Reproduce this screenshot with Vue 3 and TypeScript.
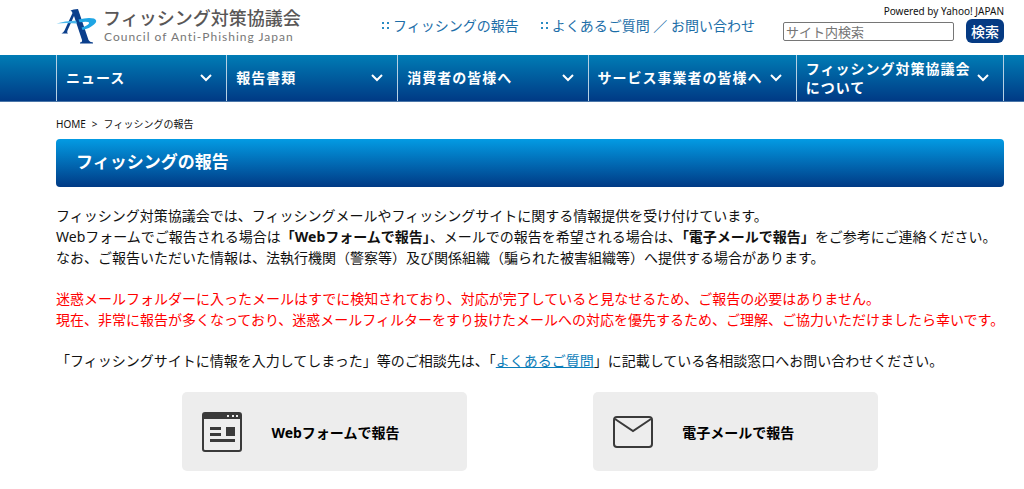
<script setup lang="ts">
interface NavItem {
  label: string[]
}

const navItems: NavItem[] = [
  { label: ['ニュース'] },
  { label: ['報告書類'] },
  { label: ['消費者の皆様へ'] },
  { label: ['サービス事業者の皆様へ'] },
  { label: ['フィッシング対策協議会', 'について'] },
]

const helpLinks: string[] = ['フィッシングの報告', 'よくあるご質問 ／ お問い合わせ']
</script>

<template>
  <div class="page">
    <header class="header wrap">
      <a class="logo" href="#">
        <svg class="mark" viewBox="0 0 41 36" aria-hidden="true">
          <path d="M14.500 2.500Q17 1 22 1L32.500 32Q33.500 34 37 34.500V35.500H24V34.500Q26.500 34 26 32L18 8L11.500 22.500Q10.500 24.500 12 25.500H5.500Q7.500 24.500 8.500 22.500L16.500 5Q16 3 14.500 2.500Z" fill="#0b3f8c" />
          <path d="M0.500 15.500Q10 12.500 20 12.800L21 15.500Q10 14.500 0.500 15.500Z" fill="#4bb8ec" />
          <path d="M22.500 11.500Q32 9 38 10.500Q42.500 12.500 38 16.500Q33.500 20.500 26.500 22L25.500 19.500Q31 18 33 15.500Q34 12.800 23.500 14.300Z" fill="#1fa5e4" />
        </svg>
        <span class="logo-text">
          <span class="logo-ja">フィッシング対策協議会</span>
          <span class="logo-en">Council of Anti-Phishing Japan</span>
        </span>
      </a>
      <nav class="help">
        <a v-for="link in helpLinks" :key="link" href="#">
          <svg class="dots" viewBox="0 0 10 8" aria-hidden="true">
            <path d="M1 0h2v2H1zM6 0h2v2H6zM1 5h2v2H1zM6 5h2v2H6z" fill="#2a8cc4" />
          </svg>
          <span>{{ link }}</span>
        </a>
      </nav>
      <form class="search" @submit.prevent>
        <span class="powered">Powered by Yahoo! JAPAN</span>
        <span class="search-row">
          <input type="search" placeholder="サイト内検索" aria-label="サイト内検索" />
          <button type="submit">検索</button>
        </span>
      </form>
    </header>

    <nav class="global">
      <ul class="wrap">
        <li v-for="item in navItems" :key="item.label[0]">
          <a href="#">
            <span class="nav-label"><span v-for="line in item.label" :key="line">{{ line }}</span></span>
            <svg class="chevron" viewBox="0 0 12 8" aria-hidden="true">
              <path d="M1 1l5 5 5-5" fill="none" stroke="#fff" stroke-width="2" />
            </svg>
          </a>
        </li>
      </ul>
    </nav>

    <main class="wrap">
      <div class="crumbs"><a href="#">HOME</a><span>&gt;</span><span>フィッシングの報告</span></div>
      <h1>フィッシングの報告</h1>
      <p>
        フィッシング対策協議会では、フィッシングメールやフィッシングサイトに関する情報提供を受け付けています。<br />
        Webフォームでご報告される場合は<b>「Webフォームで報告」</b>、メールでの報告を希望される場合は、<b>「電子メールで報告」</b>をご参考にご連絡ください。<br />
        なお、ご報告いただいた情報は、法執行機関（警察等）及び関係組織（騙られた被害組織等）へ提供する場合があります。
      </p>
      <p class="notice">
        迷惑メールフォルダーに入ったメールはすでに検知されており、対応が完了していると見なせるため、ご報告の必要はありません。<br />
        現在、非常に報告が多くなっており、迷惑メールフィルターをすり抜けたメールへの対応を優先するため、ご理解、ご協力いただけましたら幸いです。
      </p>
      <p>「フィッシングサイトに情報を入力してしまった」等のご相談先は、「<a href="#">よくあるご質問</a>」に記載している各相談窓口へお問い合わせください。</p>
      <div class="cards">
        <a class="card" href="#">
          <svg class="icon" viewBox="0 0 40 40" aria-hidden="true">
            <rect x="1" y="1" width="38" height="38" rx="2" fill="none" stroke="#3a3a3a" stroke-width="2" />
            <path d="M1 1h38v6H1z" fill="#3a3a3a" />
            <path d="M25 3h2v2h-2zM30 3h2v2h-2zM34 3h2v2h-2z" fill="#ededed" />
            <path d="M8 15h11v3H8zM8 21h11v3H8zM8 27h25v3H8zM24 15h9v9h-9z" fill="#3a3a3a" />
          </svg>
          <span>Webフォームで報告</span>
        </a>
        <a class="card" href="#">
          <svg class="icon" viewBox="0 0 40 40" aria-hidden="true">
            <rect x="1" y="5" width="38" height="30" rx="3" fill="none" stroke="#3a3a3a" stroke-width="2" />
            <path d="M2 7l18 12L38 7" fill="none" stroke="#3a3a3a" stroke-width="2" />
          </svg>
          <span>電子メールで報告</span>
        </a>
      </div>
    </main>
  </div>
</template>

<style>
body {
  margin: 0;
  background: #fff;
}
</style>

<style scoped>
.page {
  font-family: 'Noto Sans', 'Noto Sans CJK JP', sans-serif;
  font-size: 14px;
  line-height: 21px;
  color: #111;
  overflow-x: hidden;
}
a {
  color: inherit;
  text-decoration: none;
}
.wrap {
  padding: 0 20px 0 56px;
}
.header {
  display: flex;
  align-items: flex-start;
  height: 55px;
}
.logo {
  display: flex;
  gap: 6px;
  padding-top: 8px;
}
.mark {
  width: 41px;
  height: 36px;
}
.logo-text {
  display: flex;
  flex-direction: column;
  color: #595757;
  white-space: nowrap;
}
.logo-ja {
  font-size: 18px;
  line-height: 21px;
  font-weight: 500;
}
.logo-en {
  padding-left: 1px;
  font-family: Lato, sans-serif;
  font-size: 12px;
  line-height: 16px;
  letter-spacing: 1px;
  color: #777;
}
.help {
  display: flex;
  gap: 21px;
  margin-left: auto;
  margin-right: 28px;
  padding-top: 15px;
  color: #1c6ea8;
  white-space: nowrap;
}
.help a {
  display: flex;
  align-items: center;
  gap: 2px;
}
.dots {
  width: 10px;
  height: 8px;
}
.search {
  display: flex;
  flex-direction: column;
  align-items: flex-end;
  padding-top: 4px;
}
.powered {
  font-size: 10px;
  line-height: 15px;
}
.search-row {
  display: flex;
  align-items: center;
  gap: 12px;
}
.search input {
  box-sizing: border-box;
  width: 171px;
  height: 19px;
  margin: 0;
  padding: 0 2px;
  border: 1px solid #767676;
  border-radius: 2px;
  appearance: none;
  font: 13px/17px 'Noto Sans CJK JP', sans-serif;
}
.search input::placeholder {
  color: #757575;
}
.search button {
  height: 24px;
  margin: 0;
  padding: 0 5px;
  border: 0;
  border-radius: 6px;
  background: #053a83;
  color: #fff;
  font: 500 14px/24px 'Noto Sans CJK JP', sans-serif;
}
.global {
  background: linear-gradient(#007cb5, #003a85);
  border-bottom: 1px solid #4a76a8;
}
.global ul {
  display: grid;
  grid-template-columns: 170fr 171fr 190fr 208fr 208fr;
  margin: 0;
  list-style: none;
}
.global li {
  min-width: 0;
  border-left: 1px solid #b5d0e4;
}
.global li:last-child {
  border-right: 1px solid #b5d0e4;
}
.global a {
  display: flex;
  align-items: center;
  justify-content: space-between;
  height: 46px;
  padding: 0 14px 0 9px;
  color: #fff;
  font-weight: 700;
  line-height: 19px;
  letter-spacing: 1px;
}
.nav-label {
  display: flex;
  flex-direction: column;
  padding-bottom: 1px;
  white-space: nowrap;
}
.chevron {
  flex: none;
  width: 12px;
  height: 8px;
}
.crumbs {
  display: flex;
  gap: 6px;
  padding: 15px 0 7px;
  font-size: 10px;
  line-height: 15px;
}
h1 {
  margin: 0 0 18px;
  padding: 0 20px 2px;
  border-radius: 4px;
  background: linear-gradient(#039be3, #003a85);
  color: #fff;
  font-size: 17px;
  line-height: 46px;
  font-weight: 700;
}
p {
  margin: 0 0 20px;
  white-space: nowrap;
}
.notice {
  color: #f00;
}
p a {
  color: #0a7cb8;
  text-decoration: underline;
}
.cards {
  display: flex;
  justify-content: space-evenly;
  padding-top: 1px;
}
.card {
  box-sizing: border-box;
  display: flex;
  align-items: center;
  gap: 29px;
  width: 30%;
  padding: 20px 20px 19px;
  border-radius: 5px;
  background: #ededed;
  color: #000;
  font-weight: 700;
}
.icon {
  flex: none;
  width: 40px;
  height: 40px;
}
</style>
